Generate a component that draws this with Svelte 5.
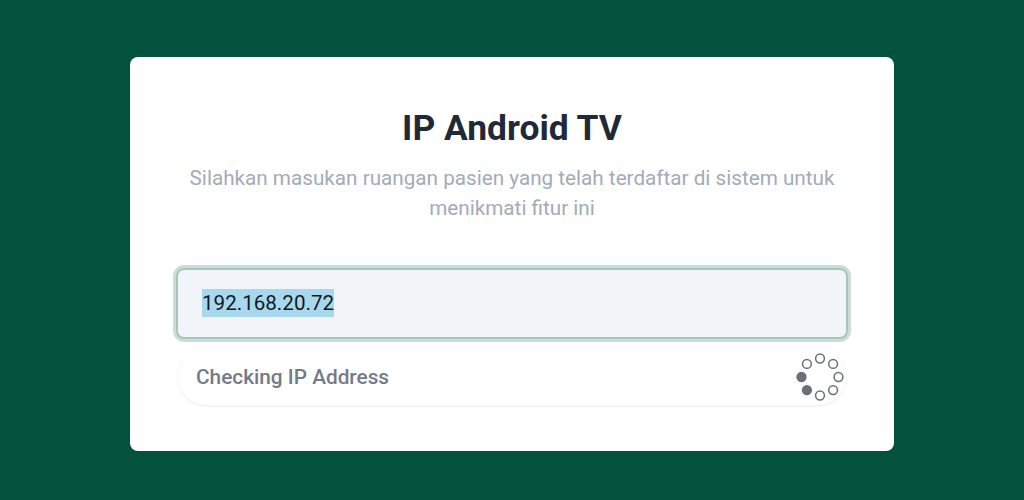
<script>
	let ip = "192.168.20.72";

	// spinner dots, clockwise from the top; the two lit ones sit bottom-left
	const dots = Array.from({ length: 8 }, (_, i) => {
		const angle = (i * Math.PI) / 4;
		return {
			x: 25 + 18.5 * Math.sin(angle),
			y: 25 - 18.5 * Math.cos(angle),
			on: i === 5 || i === 6,
		};
	});
</script>

<div class="page">
	<div class="card">
		<h1>IP Android TV</h1>
		<p>Silahkan masukan ruangan pasien yang telah terdaftar di sistem untuk menikmati fitur ini</p>

		<div class="field">
			<span class="value">{ip}</span>
		</div>

		<div class="status">
			<span>Checking IP Address</span>
			<svg width="50" height="50" viewBox="0 0 50 50">
				{#each dots as dot}
					<circle cx={dot.x} cy={dot.y} r="4.4" class:on={dot.on} />
				{/each}
			</svg>
		</div>
	</div>
</div>

<style>
	:global(body) {
		margin: 0;
		background: #03523d;
	}

	.page {
		height: 500px;
		display: flex;
		justify-content: center;
		align-items: flex-start;
		padding-top: 57px;
		box-sizing: border-box;
		font-family: Roboto, "Liberation Sans", sans-serif;
	}

	.card {
		width: 764px;
		height: 394px;
		box-sizing: border-box;
		padding: 51px 46px 0;
		background: #fff;
		border-radius: 8px;
		text-align: center;
	}

	h1 {
		margin: 0;
		font-size: 35.4px;
		line-height: 40px;
		font-weight: 700;
		color: #1f2937;
	}

	p {
		margin: 15px -10px 0;
		font-size: 20.7px;
		line-height: 30px;
		color: #a3abb8;
	}

	.field {
		margin-top: 45px;
		height: 71px;
		box-sizing: border-box;
		display: flex;
		align-items: center;
		padding: 0 24px 1px;
		background: #f1f5f9;
		border: 2px solid #a9c4ba;
		border-radius: 8px;
		box-shadow: 0 0 0 3px #cddcd6;
		font-size: 20.6px;
		color: #111827;
		text-align: left;
	}

	.value {
		background: #a8d8ee;
		line-height: 28px;
	}

	.status {
		margin: 10px 2px 0;
		height: 56px;
		box-sizing: border-box;
		display: flex;
		align-items: center;
		justify-content: space-between;
		padding: 0 1px 0 18px;
		border-radius: 28px;
		box-shadow: 0 1px 3px rgba(0, 0, 0, 0.08);
		font-size: 20.8px;
		font-weight: 500;
		color: #737b89;
	}

	circle {
		fill: #fff;
		stroke: #6b6f76;
		stroke-width: 1.5;
	}

	circle.on {
		fill: #6b6f76;
	}
</style>
